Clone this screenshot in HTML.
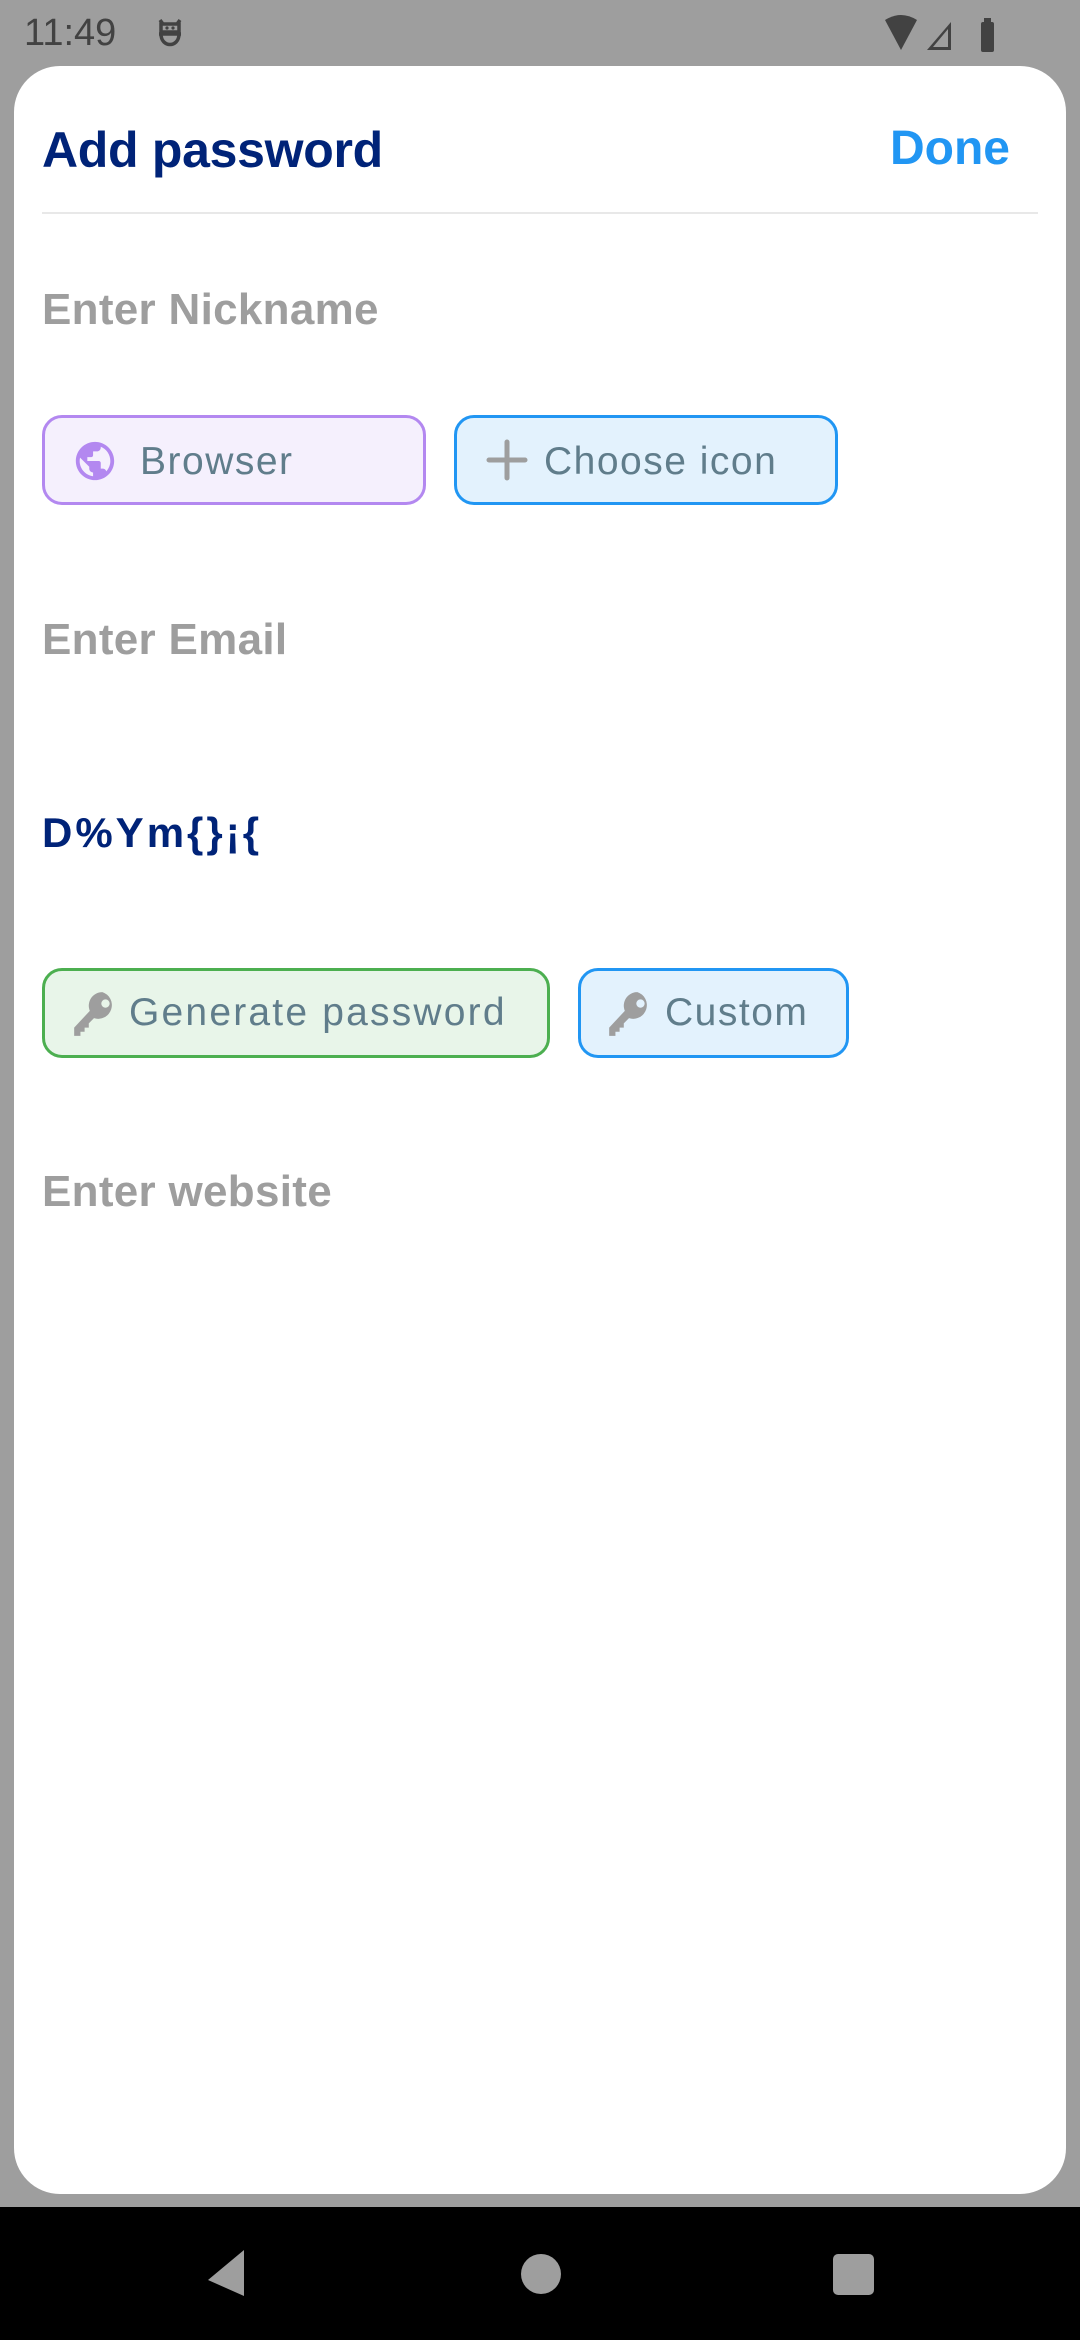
<!DOCTYPE html>
<html><head><meta charset="utf-8"><style>
*{margin:0;padding:0;box-sizing:border-box}
body{width:1080px;height:2340px;background:#9e9e9e;position:relative;overflow:hidden;font-family:"Liberation Sans",sans-serif}
.abs{position:absolute}
.sheet{left:14px;top:66px;width:1052px;height:2128px;background:#fff;border-radius:46px}
.nav{left:0;top:2207px;width:1080px;height:133px;background:#000}
.ph{color:#9e9e9e;font-weight:bold;font-size:44px;left:42px;letter-spacing:0.3px}
.chip{border-radius:20px;border:3px solid;height:90px;top:0}
.ct{font-size:39px;color:#607d8b;white-space:nowrap;letter-spacing:1.5px}
</style></head><body>
<div class="abs" style="left:24px;top:12px;font-size:38px;color:#424242">11:49</div>
<svg class="abs" style="left:155px;top:16px" width="30" height="36" viewBox="0 0 30 36"><path d="M5 4 L8 8 M25 4 L22 8 M6 8 H24 V16 H6 Z M4 18 H26 M6 18 C6 32 24 32 24 18" fill="none" stroke="#424242" stroke-width="3.5"/><circle cx="12" cy="12" r="1.6" fill="#424242"/><circle cx="18" cy="12" r="1.6" fill="#424242"/></svg>
<svg class="abs" style="left:883px;top:14px" width="120" height="40" viewBox="0 0 120 40"><path d="M2 6 Q18 -4 34 6 L18 36 Z" fill="#424242"/><path d="M44 36 L68 8 V36 Z M50 33 H65 V15 Z" fill="#424242" fill-rule="evenodd"/><rect x="101" y="4" width="7" height="5" fill="#424242"/><rect x="98" y="8" width="13" height="30" rx="2" fill="#424242"/></svg>
<div class="abs sheet"></div>
<div class="abs" style="left:42px;top:121px;font-size:50px;font-weight:bold;color:#002378;letter-spacing:-0.3px">Add password</div>
<div class="abs" style="left:890px;top:121px;font-size:48px;font-weight:bold;color:#2196f3">Done</div>
<div class="abs" style="left:42px;top:212px;width:996px;height:2px;background:#e8e8e8"></div>
<div class="abs ph" style="top:285px">Enter Nickname</div>

<div class="abs chip" style="left:42px;top:415px;width:384px;background:#f5f0fd;border-color:#b388f0"></div>
<svg class="abs" style="left:72px;top:438px" width="46" height="46" viewBox="0 0 24 24"><path fill="#b388f0" d="M12 2C6.48 2 2 6.48 2 12s4.48 10 10 10 10-4.48 10-10S17.52 2 12 2zm-1 17.93c-3.95-.49-7-3.85-7-7.93 0-.62.08-1.21.21-1.79L9 15v1c0 1.1.9 2 2 2v1.93zm6.9-2.54c-.26-.81-1-1.39-1.9-1.39h-1v-3c0-.55-.45-1-1-1H8v-2h2c.55 0 1-.45 1-1V7h2c1.1 0 2-.9 2-2v-.41c2.93 1.19 5 4.06 5 7.41 0 2.08-.8 3.97-2.1 5.39z"/></svg>
<div class="abs ct" style="left:140px;top:440px">Browser</div>

<div class="abs chip" style="left:454px;top:415px;width:384px;background:#e3f2fd;border-color:#2196f3"></div>
<svg class="abs" style="left:486px;top:439px" width="42" height="42" viewBox="0 0 42 42"><path d="M21 3 V39 M3 21 H39" stroke="#9e9e9e" stroke-width="5" stroke-linecap="round"/></svg>
<div class="abs ct" style="left:544px;top:440px">Choose icon</div>

<div class="abs ph" style="top:615px">Enter Email</div>
<div class="abs" style="left:42px;top:809px;font-size:42px;font-weight:bold;color:#002378;letter-spacing:3px">D%Ym{}¡{</div>

<div class="abs chip" style="left:42px;top:968px;width:508px;background:#e8f5e9;border-color:#4caf50"></div>
<svg class="abs" style="left:70px;top:990px" width="48" height="48" viewBox="0 0 46 46"><path fill="#9e9e9e" d="M31 2a13 13 0 0 0-12 18L4 36v8h6v-4h4v-4h4v-4l5-5A13 13 0 1 0 31 2zm3 7a4 4 0 1 1 0 8 4 4 0 0 1 0-8z"/></svg>
<div class="abs ct" style="left:129px;top:991px;letter-spacing:2.2px">Generate password</div>

<div class="abs chip" style="left:578px;top:968px;width:271px;background:#e3f2fd;border-color:#2196f3"></div>
<svg class="abs" style="left:605px;top:990px" width="48" height="48" viewBox="0 0 46 46"><path fill="#9e9e9e" d="M31 2a13 13 0 0 0-12 18L4 36v8h6v-4h4v-4h4v-4l5-5A13 13 0 1 0 31 2zm3 7a4 4 0 1 1 0 8 4 4 0 0 1 0-8z"/></svg>
<div class="abs ct" style="left:665px;top:991px">Custom</div>

<div class="abs ph" style="top:1167px">Enter website</div>

<div class="abs nav"></div>
<svg class="abs" style="left:200px;top:2248px" width="680" height="56" viewBox="0 0 680 56"><path d="M44 6 L8 36 L44 52 Z" fill="#9e9e9e" transform="translate(0,-4)"/><circle cx="341" cy="26" r="20" fill="#9e9e9e"/><rect x="633" y="6" width="41" height="41" rx="5" fill="#9e9e9e"/></svg>
</body></html>
